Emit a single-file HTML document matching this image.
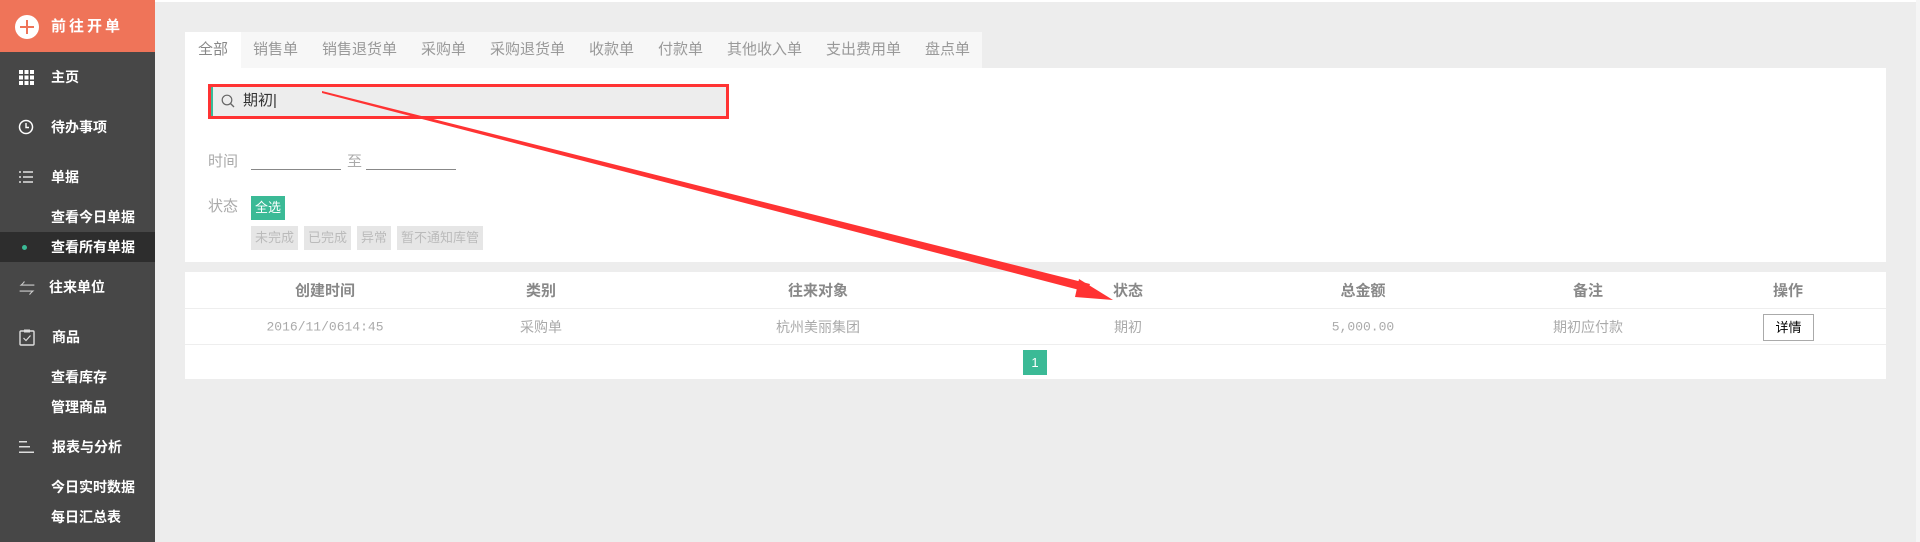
<!DOCTYPE html>
<html><head><meta charset="utf-8"><style>
*{margin:0;padding:0;box-sizing:border-box}
body{width:1920px;height:542px;background:#ededed;position:relative;overflow:hidden;font-family:"Liberation Sans","Noto Sans CJK SC","WenQuanYi Zen Hei",sans-serif}
.a{position:absolute;white-space:nowrap}
#side{position:absolute;left:0;top:0;width:155px;height:542px;background:#474747}
.si{position:absolute;left:51px;color:#fff;font-size:14px;font-weight:bold;line-height:20px;transform:translateY(-10px)}
.tab{position:absolute;top:32px;height:36px;line-height:36px;font-size:15px;color:#999;background:#f7f7f7;text-align:center}
.th{position:absolute;top:290px;transform:translate(-50%,-50%);font-size:15px;color:#888;font-weight:bold}
.td{position:absolute;top:327px;transform:translate(-50%,-50%);font-size:14px;color:#aaa}
.st{position:absolute;top:226px;height:24px;line-height:24px;font-size:13px;color:#bbb;background:#e6e6e6;text-align:center}
</style></head><body>
<div class="a" style="left:155px;top:0;width:1765px;height:2px;background:#fff"></div>
<div class="a" style="left:1916px;top:0;width:4px;height:542px;background:#f5f5f5"></div>
<div id="side">
<div class="a" style="left:0;top:0;width:155px;height:52px;background:#ef7459"></div>
<div class="a" style="left:15px;top:15px;width:24px;height:24px;border-radius:50%;background:#fff"></div>
<div class="a" style="left:20px;top:26px;width:14px;height:2px;background:#ef7459"></div>
<div class="a" style="left:26px;top:20px;width:2px;height:14px;background:#ef7459"></div>
<div class="si" style="top:27px;font-size:15px;letter-spacing:3px">前往开单</div>
<svg class="a" style="left:19px;top:70px" width="15" height="15"><g fill="#fff"><rect x="0" y="0" width="4" height="4"/><rect x="5.5" y="0" width="4" height="4"/><rect x="11" y="0" width="4" height="4"/><rect x="0" y="5.5" width="4" height="4"/><rect x="5.5" y="5.5" width="4" height="4"/><rect x="11" y="5.5" width="4" height="4"/><rect x="0" y="11" width="4" height="4"/><rect x="5.5" y="11" width="4" height="4"/><rect x="11" y="11" width="4" height="4"/></g></svg>
<div class="si" style="top:77px">主页</div>
<svg class="a" style="left:18px;top:119px" width="16" height="16"><circle cx="8" cy="8" r="6.5" fill="none" stroke="#fff" stroke-width="1.5"/><path d="M8 4v4.5h3" fill="none" stroke="#fff" stroke-width="1.4"/></svg>
<div class="si" style="top:127px">待办事项</div>
<svg class="a" style="left:19px;top:170px" width="15" height="14"><g fill="#bbb"><rect x="0" y="1" width="2" height="2"/><rect x="0" y="6" width="2" height="2"/><rect x="0" y="11" width="2" height="2"/><rect x="4" y="1" width="10" height="2"/><rect x="4" y="6" width="10" height="2"/><rect x="4" y="11" width="10" height="2"/></g></svg>
<div class="si" style="top:177px">单据</div>
<div class="si" style="top:217px">查看今日单据</div>
<div class="a" style="left:0;top:232px;width:155px;height:30px;background:#2d2d2d"></div>
<div class="a" style="left:22px;top:245px;width:5px;height:5px;border-radius:50%;background:#3bba96"></div>
<div class="si" style="top:247px">查看所有单据</div>
<div class="a" style="left:19px;top:275px;color:#ccc;font-size:16px">⇋</div>
<div class="si" style="top:287px;left:49px">往来单位</div>
<svg class="a" style="left:19px;top:329px" width="16" height="17"><rect x="1" y="2" width="14" height="14" rx="1" fill="none" stroke="#ddd" stroke-width="1.4"/><rect x="5" y="0.5" width="6" height="3" fill="#ddd"/><path d="M4.5 9l2.5 2.5 4.5-5" fill="none" stroke="#ddd" stroke-width="1.2"/></svg>
<div class="si" style="top:337px;left:52px">商品</div>
<div class="si" style="top:377px">查看库存</div>
<div class="si" style="top:407px">管理商品</div>
<svg class="a" style="left:19px;top:440px" width="16" height="14"><g fill="#ddd"><rect x="0" y="1" width="8" height="1.5"/><rect x="0" y="6" width="11" height="1.5"/><rect x="0" y="11.5" width="15" height="1.5"/></g></svg>
<div class="si" style="top:447px;left:52px">报表与分析</div>
<div class="si" style="top:487px">今日实时数据</div>
<div class="si" style="top:517px">每日汇总表</div>
</div>

<div class="a" style="left:185px;top:68px;width:1701px;height:194px;background:#fff"></div>
<div class="tab" style="left:185px;width:56px;background:#fff;color:#888">全部</div>
<div class="tab" style="left:241px;width:69px">销售单</div>
<div class="tab" style="left:310px;width:99px">销售退货单</div>
<div class="tab" style="left:409px;width:69px">采购单</div>
<div class="tab" style="left:478px;width:99px">采购退货单</div>
<div class="tab" style="left:577px;width:69px">收款单</div>
<div class="tab" style="left:646px;width:69px">付款单</div>
<div class="tab" style="left:715px;width:99px">其他收入单</div>
<div class="tab" style="left:814px;width:99px">支出费用单</div>
<div class="tab" style="left:913px;width:69px">盘点单</div>

<div class="a" style="left:208px;top:84px;width:521px;height:35px;border:3px solid #f33;background:#ededed"></div>
<div class="a" style="left:211px;top:87px;width:2px;height:29px;background:#3bba96"></div>
<svg class="a" style="left:221px;top:94px" width="14" height="14"><circle cx="6" cy="6" r="4.8" fill="none" stroke="#666" stroke-width="1.2"/><path d="M9.5 9.5l3.5 3.5" stroke="#666" stroke-width="1.3"/></svg>
<div class="a" style="left:243px;top:91px;font-size:15px;color:#333;line-height:20px">期初|</div>

<div class="a" style="left:208px;top:152px;font-size:15px;color:#aaa;line-height:20px">时间</div>
<div class="a" style="left:251px;top:169px;width:90px;height:1px;background:#888"></div>
<div class="a" style="left:347px;top:152px;font-size:15px;color:#aaa;line-height:20px">至</div>
<div class="a" style="left:366px;top:169px;width:90px;height:1px;background:#888"></div>
<div class="a" style="left:208px;top:197px;font-size:15px;color:#aaa;line-height:20px">状态</div>
<div class="a" style="left:251px;top:196px;width:34px;height:24px;line-height:24px;background:#3bba96;color:#fff;font-size:13px;text-align:center">全选</div>
<div class="st" style="left:251px;width:47px">未完成</div>
<div class="st" style="left:304px;width:47px">已完成</div>
<div class="st" style="left:357px;width:34px">异常</div>
<div class="st" style="left:397px;width:86px">暂不通知库管</div>

<div class="a" style="left:185px;top:272px;width:1701px;height:107px;background:#fff"></div>
<div class="a" style="left:185px;top:308px;width:1701px;height:1px;background:#eee"></div>
<div class="a" style="left:185px;top:344px;width:1701px;height:1px;background:#eee"></div>
<div class="th" style="left:325px">创建时间</div>
<div class="th" style="left:541px">类别</div>
<div class="th" style="left:818px">往来对象</div>
<div class="th" style="left:1128px">状态</div>
<div class="th" style="left:1363px">总金额</div>
<div class="th" style="left:1588px">备注</div>
<div class="th" style="left:1788px">操作</div>
<div class="td" style="left:325px;font-family:'Liberation Mono',monospace;font-size:13px">2016/11/0614:45</div>
<div class="td" style="left:541px">采购单</div>
<div class="td" style="left:818px">杭州美丽集团</div>
<div class="td" style="left:1128px">期初</div>
<div class="td" style="left:1363px;font-family:'Liberation Mono',monospace;font-size:13px">5,000.00</div>
<div class="td" style="left:1588px">期初应付款</div>
<div class="a" style="left:1763px;top:314px;width:51px;height:27px;border:1px solid #aaa;font-size:13px;color:#000;text-align:center;line-height:25px">详情</div>
<div class="a" style="left:1023px;top:350px;width:24px;height:25px;background:#3bba96;color:#fff;font-size:13px;text-align:center;line-height:25px">1</div>

<svg class="a" style="left:0;top:0" width="1920" height="542">
<polygon points="322,91 1090,284 1087,292 322,93" fill="#f33"/>
<polygon points="1113,300 1079,279 1075,297" fill="#f33"/>
</svg>
</body></html>
